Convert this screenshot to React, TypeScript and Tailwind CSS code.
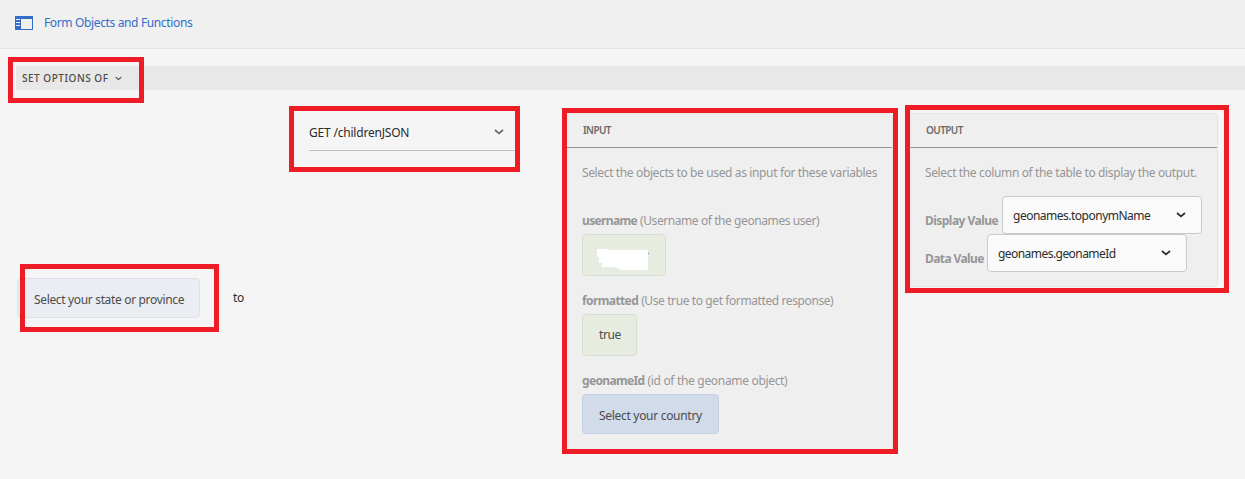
import type { ReactNode } from "react";

function Chevron({ className }: { className: string }) {
  return (
    <svg viewBox="0 0 10 6" fill="none" stroke="currentColor" strokeWidth="1.7" className={className}>
      <path d="M1 1 L5 4.4 L9 1" />
    </svg>
  );
}

function Highlight({ className }: { className: string }) {
  return <div className={`pointer-events-none absolute z-10 border-[5px] border-[#ee1c25] ${className}`} />;
}

function PanelIcon() {
  return (
    <svg width="18" height="14" viewBox="0 0 18 14" shapeRendering="crispEdges" className="shrink-0">
      <path fill="#326ec8" d="M0 0H18V14H0Z" />
      <path fill="#f0f0f0" d="M6 3H17V13H6ZM1 3H5V4H1ZM1 6H5V7H1ZM1 9H5V10H1Z" />
    </svg>
  );
}

function Panel({ title, className, children }: { title: string; className: string; children: ReactNode }) {
  return (
    <section className={`shrink-0 rounded-[4px] border border-[#e4e4e4] bg-[#efefef] ${className}`}>
      <h2 className="h-[34px] border-b border-[#969696] pl-4 text-[10px] leading-[33px] font-semibold text-[#6b6b6b]">
        <span className="tracking-[-0.6px]">{title}</span>
      </h2>
      {children}
    </section>
  );
}

function Field({ name, hint, className, hintClass, nameClass, children }: {
  name: string; hint: string; className: string; hintClass: string; nameClass: string; children: ReactNode;
}) {
  return (
    <div className={className}>
      <div className="flex h-5 gap-[3px] leading-5 text-[#969696]">
        <b className={nameClass}>{name}</b>
        <span className={hintClass}>{hint}</span>
      </div>
      {children}
    </div>
  );
}

function Select({ label, value, labelClass, valueClass }: {
  label: string; value: string; labelClass: string; valueClass: string;
}) {
  return (
    <div className="flex h-[38px]">
      <b className={`shrink-0 pt-[15px] leading-5 text-[#969696] ${labelClass}`}>{label}</b>
      <button className="flex h-[38px] w-[200px] shrink-0 items-center justify-between rounded-[4px] border border-[#cacaca] bg-[#fafafa] pr-[15px] pl-[10px] text-[#2c2c2c]">
        <span className={`pt-[2px] ${valueClass}`}>{value}</span>
        <Chevron className="h-[6px] w-[10px]" />
      </button>
    </div>
  );
}

export default function App() {
  return (
    <div className="h-[479px] w-[1245px] overflow-hidden bg-[#f5f5f5] font-['Noto_Sans','Open_Sans',sans-serif] text-[12px] whitespace-nowrap text-[#4b4b4b]">
      <header className="flex h-[49px] items-center gap-[11px] border-b border-[#e2e2e2] bg-[#f0f0f0] pb-[2px] pl-[15px] text-[#326ec8]">
        <PanelIcon />
        <span className="pb-px tracking-[-0.36px]">Form Objects and Functions</span>
      </header>
      <div className="relative mt-[17px] ml-4 flex h-6 items-center bg-[#e8e8e8] pl-[6px]">
        <span className="text-[10px] font-medium tracking-[0.52px]">SET OPTIONS OF</span>
        <Chevron className="ml-[6px] h-[5px] w-[7px]" />
        <Highlight className="-top-[9px] -left-2 h-[46px] w-[136px]" />
      </div>
      <main className="flex items-start pl-[17px]">
        <div className="relative mt-[188px] flex h-10 w-[183px] shrink-0 items-center rounded-[4px] border border-[#dce2ea] bg-[#eaeef3] pt-[3px] pl-4">
          <span className="tracking-[-0.34px]">Select your state or province</span>
          <Highlight className="-top-[15px] left-[2px] h-[68px] w-[199px]" />
        </div>
        <span className="mt-[198px] ml-[33px] w-[76px] shrink-0 leading-5 tracking-[-0.3px] text-[#2c2c2c]">to</span>
        <div className="relative mt-6 flex h-[37px] w-[207px] shrink-0 items-center justify-between border-b border-[#bebebe] pr-3 text-[#2c2c2c]">
          <span className="pt-[2px] tracking-[-0.2px]">GET /childrenJSON</span>
          <Chevron className="h-[6px] w-[10px] text-[#6b6b6b]" />
          <Highlight className="-top-2 -left-5 h-[66px] w-[231px]" />
        </div>
        <div className="relative mt-[23px] ml-[50px] shrink-0">
          <Panel title="INPUT" className="h-[337px] w-[327px]">
            <div className="pt-[15px] pl-[15px]">
              <p className="leading-5 tracking-[-0.37px] text-[#969696]">Select the objects to be used as input for these variables</p>
              <Field name="username" hint="(Username of the geonames user)" nameClass="tracking-[-0.65px]" hintClass="tracking-[-0.42px]" className="mt-7">
                <div className="mt-[3px] h-[42px] w-[84px] rounded-[4px] border border-[#d8dfd2] bg-[#e6ece0] pt-[14px] pl-[14px]">
                  <svg width="54" height="22" viewBox="0 0 54 22" shapeRendering="crispEdges">
                    <path fill="white" d="M0 0H11V1H51V21H23V20H21V19H18V18H5V14H2V8H0Z" />
                    <path fill="#4b9bcf" d="M51 4H52V5H51Z" />
                  </svg>
                </div>
              </Field>
              <Field name="formatted" hint="(Use true to get formatted response)" nameClass="tracking-[-0.6px]" hintClass="tracking-[-0.4px]" className="mt-[15px]">
                <div className="mt-[3px] flex h-[42px] w-[55px] items-center rounded-[4px] border border-[#d8dfd2] bg-[#e6ece0] pl-4">
                  <span className="tracking-[-0.4px]">true</span>
                </div>
              </Field>
              <Field name="geonameId" hint="(id of the geoname object)" nameClass="tracking-[-0.65px]" hintClass="tracking-[-0.32px]" className="mt-[15px]">
                <div className="mt-[3px] flex h-10 w-[137px] items-center rounded-[4px] border border-[#c3cfe2] bg-[#d1dbe9] pt-[3px] pl-4">
                  <span className="tracking-[-0.3px]">Select your country</span>
                </div>
              </Field>
            </div>
          </Panel>
          <Highlight className="-top-[5px] -left-[4px] h-[346px] w-[336px]" />
        </div>
        <div className="relative mt-[23px] ml-4 shrink-0">
          <Panel title="OUTPUT" className="h-[174px] w-[309px]">
            <div className="pt-[15px] pl-[15px]">
              <p className="mb-[13px] leading-5 tracking-[-0.37px] text-[#969696]">Select the column of the table to display the output.</p>
              <Select label="Display Value" value="geonames.toponymName" labelClass="w-[77px] tracking-[-0.53px]" valueClass="tracking-[-0.5px]" />
              <Select label="Data Value" value="geonames.geonameId" labelClass="w-[62px] tracking-[-0.6px]" valueClass="tracking-[-0.55px]" />
            </div>
          </Panel>
          <Highlight className="-top-2 -left-[4px] h-[188px] w-[324px]" />
        </div>
      </main>
    </div>
  );
}
